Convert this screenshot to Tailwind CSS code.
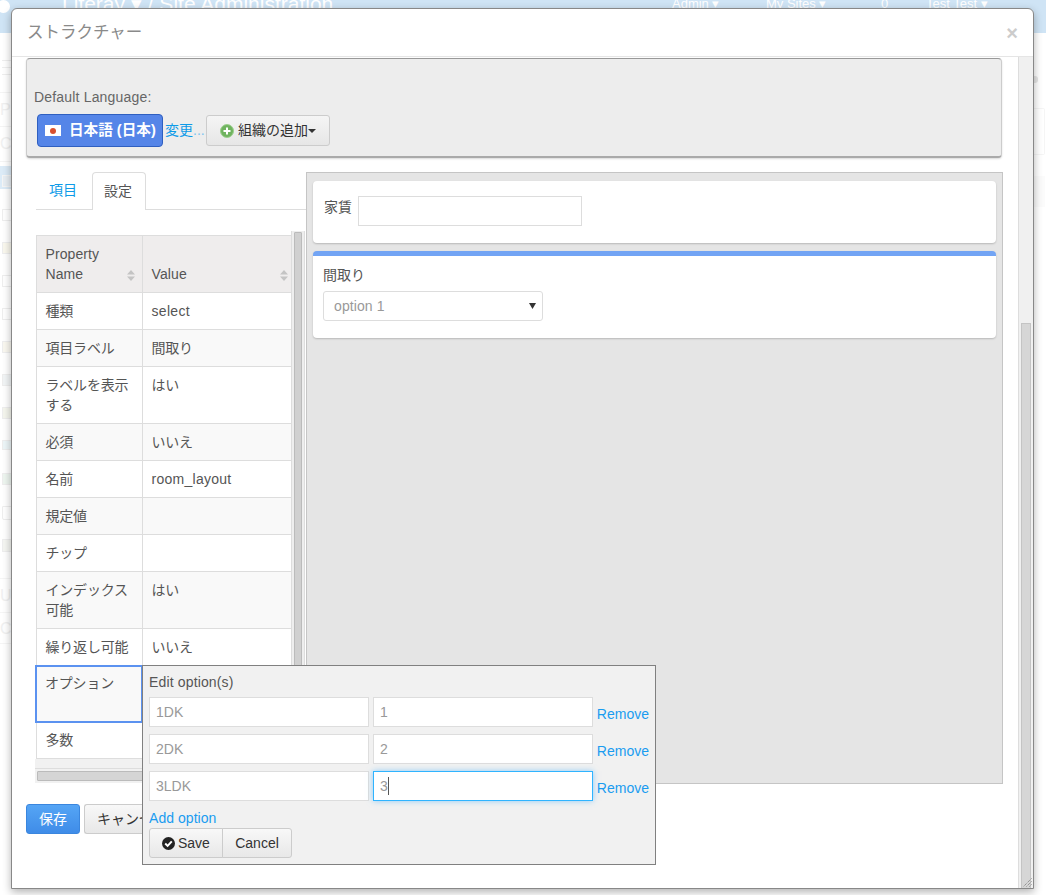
<!DOCTYPE html>
<html lang="ja">
<head>
<meta charset="utf-8">
<script src="https://cdn.jsdelivr.net/npm/@tailwindcss/browser@4"></script>
</head>
<body class="m-0">
<div class="relative w-[1046px] h-[895px] overflow-hidden bg-white text-[14px] text-[#555] font-['Liberation_Sans','Noto_Sans_CJK_JP',sans-serif]">
  <!-- page behind the modal -->
  <div class="h-[33px] bg-[#cfe4f5] text-white overflow-hidden">
    <div class="flex items-center h-[24px] -mt-[8px] pl-[62px]">
      <span class="text-[21px] w-[610px] whitespace-nowrap">Liferay ▾ / Site Administration</span>
      <span class="text-[13px] w-[94px] whitespace-nowrap">Admin ▾</span>
      <span class="text-[13px] w-[115px] whitespace-nowrap">My Sites ▾</span>
      <span class="text-[13px] w-[45px]">0</span>
      <span class="text-[13px] whitespace-nowrap">Test Test ▾</span>
    </div>
  </div>
  <div class="absolute left-0 top-0 w-[11px] h-[13px] overflow-hidden"><div class="w-[13px] h-[13px] -ml-[3px] rounded-full bg-white"></div></div>

  <!-- left rail of the page, mostly hidden by the modal -->
  <div class="absolute left-0 top-[33px] w-[11px] h-[612px] overflow-hidden flex flex-col text-[#f0f0f0]">
    <div class="h-[27px] shrink-0"></div>
    <div class="h-[15px] shrink-0 flex flex-col justify-between pl-[2px]"><div class="h-[1px] bg-[#eee]"></div><div class="h-[1px] bg-[#eee]"></div><div class="h-[1px] bg-[#eee]"></div></div>
    <div class="h-[18px] shrink-0 border-b border-[#f4f4f4]"></div>
    <div class="h-[34px] shrink-0 border-b border-[#f4f4f4] text-[16px] leading-[34px] whitespace-nowrap">Pa</div>
    <div class="h-[35px] shrink-0 border-b border-[#f4f4f4] text-[16px] leading-[34px] whitespace-nowrap">Co</div>
    <div class="h-[4px] shrink-0"></div>
    <div class="h-[23px] shrink-0 bg-[#dcebf7] pt-[9px] pl-[2px]"><div class="w-[12px] h-[12px] border border-[#f5f5f5] bg-[#e8eef3]"></div></div>
    <div class="h-[10px] shrink-0"></div>
    <div class="h-[33px] shrink-0 pl-[2px] pt-[10px]"><div class="w-[12px] h-[12px] border border-[#eee]"></div></div>
    <div class="h-[33px] shrink-0 pl-[2px] pt-[10px]"><div class="w-[12px] h-[12px] border border-[#eee] bg-[#faf8ee]"></div></div>
    <div class="h-[33px] shrink-0 pl-[2px] pt-[10px]"><div class="w-[12px] h-[12px] border border-[#eee]"></div></div>
    <div class="h-[33px] shrink-0 pl-[2px] pt-[10px]"><div class="w-[12px] h-[12px] border border-[#eee]"></div></div>
    <div class="h-[33px] shrink-0 pl-[2px] pt-[10px]"><div class="w-[12px] h-[12px] border border-[#eee] bg-[#faf8f0]"></div></div>
    <div class="h-[33px] shrink-0 pl-[2px] pt-[10px]"><div class="w-[12px] h-[12px] border border-[#eee] bg-[#f2f5f6]"></div></div>
    <div class="h-[33px] shrink-0 pl-[2px] pt-[10px]"><div class="w-[12px] h-[12px] border border-[#eee] bg-[#f5f6ee]"></div></div>
    <div class="h-[33px] shrink-0 pl-[2px] pt-[10px]"><div class="w-[12px] h-[10px] border border-[#eee] bg-[#edf6f8]"></div></div>
    <div class="h-[33px] shrink-0 pl-[2px] pt-[10px]"><div class="w-[12px] h-[12px] border border-[#eee] bg-[#eef6f0]"></div></div>
    <div class="h-[33px] shrink-0 pl-[2px] pt-[10px]"><div class="w-[12px] h-[14px] border border-[#eee] rounded-b-[2px]"></div></div>
    <div class="h-[33px] shrink-0 pl-[2px] pt-[10px]"><div class="w-[12px] h-[13px] border border-[#eee] bg-[#f5f6f2]"></div></div>
  </div>
  <div class="absolute left-0 top-[578px] w-[11px] h-[66px] overflow-hidden flex flex-col text-[#f0f0f0] border-t border-[#f5f5f5]">
    <div class="h-[34px] shrink-0 border-b border-[#f5f5f5] text-[16px] leading-[34px]">Us</div>
    <div class="h-[31px] shrink-0 border-b border-[#f5f5f5] text-[16px] leading-[32px]">Co</div>
  </div>
  <!-- right side of the page, mostly hidden by the modal -->
  <div class="absolute left-[1034px] top-[76px] w-[4px] h-[7px] bg-[#e6e6e6] rounded-r-[3px]"></div>
  <div class="absolute left-[1034px] top-[108px] w-[11px] h-[47px] border-y border-r border-[#f5f5f5] rounded-r-[2px]"></div>
  <div class="absolute left-[1034px] top-[176px] w-[11px] h-[31px] bg-[#fbfbfb]"></div>

  <!-- modal -->
  <div class="absolute left-[11px] top-[8px] w-[1023px] h-[881px] flex flex-col bg-white border border-[#888] rounded-t-[6px] shadow-[0_3px_9px_rgba(0,0,0,0.3)]">
    <div class="flex items-center justify-between h-[48px] shrink-0 pl-[15px] pr-[15px] border-b border-[#e5e5e5]">
      <span class="text-[16.5px] text-[#8a8a8a]">ストラクチャー</span>
      <span class="text-[20px] font-bold text-[#ccc] leading-none">×</span>
    </div>
    <div class="flex flex-1 min-h-0">
      <div class="flex-1 min-w-0 pl-[14px] pr-[15px] pt-[1px] relative">
        <!-- language bar -->
        <div class="h-[100px] w-[976px] bg-[#ededed] border-x border-x-[#ccc] border-t border-t-[#999] border-b-2 border-b-[#aaa] rounded-[4px] pl-[7px] pt-[29px] shadow-[0_1px_2px_rgba(0,0,0,0.15)]">
          <div class="leading-[18px] text-[#666] tracking-[0.18px]">Default Language:</div>
          <div class="flex items-center mt-[8px] ml-[3px]">
            <div class="flex items-center w-[126px] h-[33px] bg-[#5585e8] border border-[#2f5fc0] rounded-[4px] text-white font-bold pl-[7px] whitespace-nowrap">
              <span class="flex items-center justify-center w-[16px] h-[11px] bg-white mr-[8px] shrink-0"><span class="w-[6px] h-[6px] rounded-full bg-[#d9502e]"></span></span>
              <span class="text-[14.6px]">日本語 (日本)</span>
            </div>
            <a class="w-[41px] ml-[2px] text-[#0d9be8] whitespace-nowrap overflow-hidden">変更<span class="text-[#7cc4f0]">....</span></a>
            <div class="flex items-center w-[124px] h-[31px] bg-gradient-to-b from-[#f5f5f5] to-[#e6e6e6] border border-[#ccc] rounded-[3px] pl-[13px] text-[#333] whitespace-nowrap">
              <svg class="w-[14px] h-[14px] mr-[4px] shrink-0" viewBox="0 0 14 14"><circle cx="7" cy="7" r="6.5" fill="#6fb35f" stroke="#9ccf8e"/><path d="M7 3.5v7M3.5 7h7" stroke="#fff" stroke-width="2"/></svg>
              <span>組織の追加</span><svg class="w-[8px] h-[4px] shrink-0" viewBox="0 0 8 4"><path d="M0 0h8L4 4z" fill="#333"/></svg>
            </div>
          </div>
        </div>

        <!-- two columns -->
        <div class="flex mt-[14px] ml-[10px] h-[612px] w-[967px]">
          <div class="relative w-[270px] shrink-0">
            <div class="flex h-[38px] border-b border-[#ddd]">
              <a class="flex items-center w-[56px] h-[37px] pl-[13px] text-[#0d9be8]">項目</a>
              <a class="flex items-center justify-center w-[54px] h-[38px] pr-[2px] bg-white border border-b-0 border-[#ddd] rounded-t-[4px] text-[#555]">設定</a>
            </div>
            <div class="flex mt-[21px] h-[553px] relative">
              <div class="w-[256px] -ml-[1px] mt-[4px] h-[549px] flex flex-col">
                <table class="w-[256px] table-fixed border-collapse text-[14px] text-[#555] leading-[20px]">
                  <colgroup><col class="w-[106px]"><col class="w-[150px]"></colgroup>
                  <thead>
                    <tr class="h-[57px] bg-[#efeded] text-left align-bottom">
                      <th class="relative font-normal border border-[#ddd] pl-[9px] pr-[8px] pb-[8px] tracking-[0.1px]">Property Name<svg class="absolute right-[7px] bottom-[11px] w-[8px] h-[11px]" viewBox="0 0 8 11"><path d="M4 0l4 4.5H0zM4 11L0 6.5h8z" fill="#c4c4c4"/></svg></th>
                      <th class="relative font-normal border border-[#ddd] pl-[9px] pr-[8px] pb-[8px] tracking-[0.1px]">Value<svg class="absolute right-[4px] bottom-[11px] w-[8px] h-[11px]" viewBox="0 0 8 11"><path d="M4 0l4 4.5H0zM4 11L0 6.5h8z" fill="#c4c4c4"/></svg></th>
                    </tr>
                  </thead>
                  <tbody class="align-top tracking-[-0.2px]">
                    <tr class="h-[37px]"><td class="border border-[#ddd] pl-[9px] pr-[7px] pt-[8px]">種類</td><td class="border border-[#ddd] pl-[9px] pr-[7px] pt-[8px] tracking-[0.3px]">select</td></tr>
                    <tr class="h-[37px] bg-[#f9f9f9]"><td class="border border-[#ddd] pl-[9px] pr-[7px] pt-[8px]">項目ラベル</td><td class="border border-[#ddd] pl-[9px] pr-[7px] pt-[8px]">間取り</td></tr>
                    <tr class="h-[57px]"><td class="border border-[#ddd] pl-[9px] pr-[7px] pt-[8px]">ラベルを表示する</td><td class="border border-[#ddd] pl-[9px] pr-[7px] pt-[8px]">はい</td></tr>
                    <tr class="h-[37px] bg-[#f9f9f9]"><td class="border border-[#ddd] pl-[9px] pr-[7px] pt-[8px]">必須</td><td class="border border-[#ddd] pl-[9px] pr-[7px] pt-[8px]">いいえ</td></tr>
                    <tr class="h-[37px]"><td class="border border-[#ddd] pl-[9px] pr-[7px] pt-[8px]">名前</td><td class="border border-[#ddd] pl-[9px] pr-[7px] pt-[8px] tracking-[0.27px]">room_layout</td></tr>
                    <tr class="h-[37px] bg-[#f9f9f9]"><td class="border border-[#ddd] pl-[9px] pr-[7px] pt-[8px]">規定値</td><td class="border border-[#ddd] pl-[9px] pr-[7px] pt-[8px]"></td></tr>
                    <tr class="h-[37px]"><td class="border border-[#ddd] pl-[9px] pr-[7px] pt-[8px]">チップ</td><td class="border border-[#ddd] pl-[9px] pr-[7px] pt-[8px]"></td></tr>
                    <tr class="h-[57px] bg-[#f9f9f9]"><td class="border border-[#ddd] pl-[9px] pr-[7px] pt-[8px]">インデックス可能</td><td class="border border-[#ddd] pl-[9px] pr-[7px] pt-[8px]">はい</td></tr>
                    <tr class="h-[37px]"><td class="border border-[#ddd] pl-[9px] pr-[7px] pt-[8px]">繰り返し可能</td><td class="border border-[#ddd] pl-[9px] pr-[7px] pt-[8px]">いいえ</td></tr>
                    <tr class="h-[56px] bg-[#f9f9f9]"><td class="border-2 border-[#5b92f0] pl-[8px] pr-[7px] pt-[6px]">オプション</td><td class="border border-[#ddd] pl-[9px] pr-[7px] pt-[8px]"></td></tr>
                    <tr class="h-[37px]"><td class="border border-[#ddd] pl-[9px] pr-[7px] pt-[7px]">多数</td><td class="border border-[#ddd] pl-[9px] pr-[7px] pt-[8px]"></td></tr>
                  </tbody>
                </table>
                <div class="h-[10px] bg-[#f1f1f1] border-b border-[#ddd] shrink-0"></div>
                <div class="h-[14px] bg-[#f1f1f1] px-[2px] pt-[2px] shrink-0">
                  <div class="h-[10px] bg-[#d5d5d5] border border-[#bbb] rounded-[1px]"></div>
                </div>
              </div>
              <div class="w-[14px] h-[553px] bg-[#eee] border-x border-[#ddd] px-[2px] pt-[1px]">
                <div class="h-[440px] bg-[#d0d0d0] border border-[#bbb] rounded-[1px]"></div>
              </div>
            </div>
          </div>

          <!-- preview -->
          <div class="w-[697px] bg-[#e5e5e5] border border-[#c5c5c5] px-[6px] pt-[8px]">
            <div class="flex h-[62px] bg-white rounded-[4px] shadow-[0_1px_2px_rgba(0,0,0,0.2)] pl-[11px] pt-[15px]">
              <span class="mt-[1px] leading-[20px]">家賃</span>
              <div class="ml-[6px] w-[224px] h-[30px] border border-[#ddd]"></div>
            </div>
            <div class="h-[87px] mt-[8px] bg-white rounded-[4px] border-t-[5px] border-[#72a4f4] shadow-[0_1px_2px_rgba(0,0,0,0.2)] pl-[10px] pt-[9px]">
              <div class="leading-[20px]">間取り</div>
              <div class="flex items-center justify-between mt-[6px] w-[220px] h-[30px] border border-[#ddd] rounded-[3px] pl-[10px] pr-[6px] text-[#999]">
                <span class="tracking-[0.1px]">option 1</span>
                <svg class="w-[7px] h-[6px]" viewBox="0 0 7 6"><path d="M0 0h7L3.5 6z" fill="#333"/></svg>
              </div>
            </div>
          </div>
        </div>

        <!-- form buttons -->
        <div class="flex mt-[20px]">
          <div class="flex items-center justify-center w-[54px] h-[30px] bg-gradient-to-b from-[#55a5f5] to-[#3f8ce8] border border-[#3a86de] rounded-[3px] text-white">保存</div>
          <div class="flex items-center w-[58px] h-[30px] ml-[4px] pl-[12px] bg-gradient-to-b from-[#f8f8f8] to-[#e8e8e8] border border-r-0 border-[#ccc] rounded-l-[3px] text-[#333] whitespace-nowrap overflow-hidden">キャンセル</div>
        </div>

        <!-- popover editor -->
        <div class="absolute left-[130px] top-[608px] w-[514px] h-[200px] bg-[#f1f1f1] border border-[#808080] px-[6px] pt-[6px]">
          <div class="leading-[20px] text-[#555] tracking-[0.15px]">Edit option(s)</div>
          <div class="flex flex-col gap-[7px] mt-[5px]">
            <div class="flex items-center">
              <div class="w-[220px] h-[30px] flex items-center px-[6px] bg-white border border-[#ddd] text-[#999]">1DK</div>
              <div class="w-[220px] h-[30px] ml-[4px] flex items-center px-[6px] bg-white border border-[#ddd] text-[#999]">1</div>
              <a class="ml-[4px] mt-[4px] text-[#1a9cf0]">Remove</a>
            </div>
            <div class="flex items-center">
              <div class="w-[220px] h-[30px] flex items-center px-[6px] bg-white border border-[#ddd] text-[#999]">2DK</div>
              <div class="w-[220px] h-[30px] ml-[4px] flex items-center px-[6px] bg-white border border-[#ddd] text-[#999]">2</div>
              <a class="ml-[4px] mt-[4px] text-[#1a9cf0]">Remove</a>
            </div>
            <div class="flex items-center">
              <div class="w-[220px] h-[30px] flex items-center px-[6px] bg-white border border-[#ddd] text-[#999]">3LDK</div>
              <div class="w-[220px] h-[30px] ml-[4px] flex items-center px-[6px] bg-white border border-[#2fb4ff] shadow-[0_0_6px_rgba(80,180,255,0.6)] text-[#999]">3<span class="w-[1px] h-[18px] bg-[#555]"></span></div>
              <a class="ml-[4px] mt-[4px] text-[#1a9cf0]">Remove</a>
            </div>
          </div>
          <a class="block mt-[8px] leading-[18px] text-[#1a9cf0] tracking-[0.05px]">Add option</a>
          <div class="flex mt-[1px] text-[#333]">
            <div class="flex items-center w-[74px] h-[30px] pl-[12px] bg-gradient-to-b from-[#f8f8f8] to-[#e8e8e8] border border-[#ccc] rounded-l-[3px]">
              <svg class="w-[13px] h-[13px] mr-[3px]" viewBox="0 0 13 13"><circle cx="6.5" cy="6.5" r="6.5" fill="#222"/><path d="M3.2 6.5l2.4 2.4 4.2-4.6" fill="none" stroke="#fff" stroke-width="2"/></svg>Save
            </div>
            <div class="flex items-center justify-center w-[70px] h-[30px] -ml-[1px] bg-gradient-to-b from-[#f8f8f8] to-[#e8e8e8] border border-[#ccc] rounded-r-[3px]">Cancel</div>
          </div>
        </div>
      </div>
      <!-- modal scrollbar -->
      <div class="relative w-[15px] shrink-0 bg-[#f0f0f0] border-l border-[#ddd] flex flex-col justify-end px-[2px]">
        <div class="h-[565px] bg-[#d6d6d6] border-x border-t border-[#c4c4c4]"></div>
        <svg class="absolute right-[1px] bottom-[1px] w-[10px] h-[10px]" viewBox="0 0 10 10"><path d="M9.5 1.5L1.5 9.5M9.5 4.5L4.5 9.5M9.5 7.5L7.5 9.5" stroke="#777" stroke-width="1" stroke-dasharray="1 1" fill="none"/></svg>
      </div>
    </div>
  </div>
</div>
</body>
</html>
